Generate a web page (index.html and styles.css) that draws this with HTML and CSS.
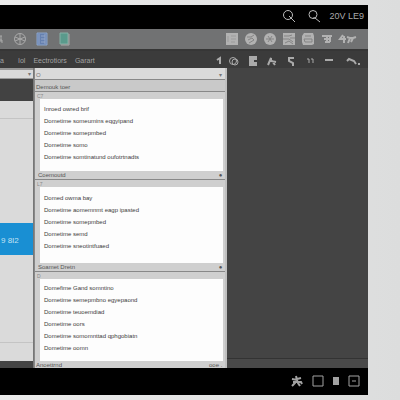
FILE: index.html
```html
<!DOCTYPE html>
<html lang="en">
<head>
    <meta charset="UTF-8">
    <meta name="viewport" content="width=device-width, initial-scale=1">
    <title>Workspace</title>
    <link rel="stylesheet" href="styles.css">
</head>
<body>
    <div class="window">
        <header class="title-bar">
            <button class="icon-btn search-btn" aria-label="Search"><svg width="14" height="14" viewBox="0 0 14 14"><circle cx="6" cy="6" r="4.5"/><path d="M7 7l6 6"/></svg></button>
            <button class="icon-btn search-btn" aria-label="Find"><svg width="14" height="14" viewBox="0 0 14 14"><circle cx="6" cy="5.500" r="4"/><path d="M6 9h2l5 4"/></svg></button>
            <span class="clock">20V LE9</span>
        </header>

        <div class="toolbar">
            <div class="tools tools-left">
                <button class="icon-btn" aria-label="Menu"><svg width="14" height="14" viewBox="0 0 14 14"><path d="M4 4h7M6 8h5v3M10 4v6"/></svg></button>
                <button class="icon-btn" aria-label="Globe"><svg width="14" height="14" viewBox="0 0 14 14"><circle cx="7" cy="7" r="5.500"/><path d="M2 5l5 2 5-2M2 9l5-2 5 2M7 2v10"/></svg></button>
                <button class="icon-btn" aria-label="Document"><svg width="14" height="14" viewBox="0 0 14 14"><path class="blue" d="M2 1h10v12H2z"/><path class="fine" d="M4 2v10M6 4h4M6 7h4M6 10h4M10 2v10"/></svg></button>
                <button class="icon-btn" aria-label="Notebook"><svg width="14" height="14" viewBox="0 0 14 14"><path class="teal" d="M3 1h8v11H3z"/><path d="M12 2v11H4"/></svg></button>
            </div>
            <div class="tools tools-right">
                <button class="icon-btn" aria-label="Page"><svg width="14" height="14" viewBox="0 0 14 14"><path class="solid" d="M1 1h12v12H1z"/><path class="cut faint" d="M3 4v6M6 4h5M6 7h5M6 10h4"/></svg></button>
                <button class="icon-btn" aria-label="Record"><svg width="14" height="14" viewBox="0 0 14 14"><circle class="solid" cx="7" cy="7" r="6"/><path class="cut" d="M3 5h4l3-2M4 8l4-2 2 2M5 11l5-3"/></svg></button>
                <button class="icon-btn" aria-label="Share"><svg width="14" height="14" viewBox="0 0 14 14"><circle class="solid" cx="7" cy="7" r="6"/><path class="cut" d="M3 7h8M5 4l4 6M9 4l-4 6"/></svg></button>
                <button class="icon-btn" aria-label="Layers"><svg width="14" height="14" viewBox="0 0 14 14"><path class="solid" d="M1 1h12v12H1z"/><path class="cut" d="M2 4h5l3-1M1 7h6l4 3M3 11l4-2 4 3M8 6h5"/></svg></button>
                <button class="icon-btn" aria-label="Save"><svg width="14" height="14" viewBox="0 0 14 14"><path class="solid" d="M3 1h9l1 3v8l-2 1H2l-1-3V4z"/><path class="cut" d="M4 4h6M3 7h8v3H4z"/></svg></button>
                <button class="icon-btn" aria-label="Format"><svg width="14" height="14" viewBox="0 0 14 14"><path class="bold" d="M2 4h10M4 7h7M7 4v6M5 10h5M10 5v5"/></svg></button>
                <button class="icon-btn wide" aria-label="Sign"><svg width="20" height="14" viewBox="0 0 20 14"><path d="M5 3L2 7h6M6 4v7" class="bold"/><path class="bold" d="M9 5l3 1-2 5M12 6h3l-2 4M15 6l3-1"/></svg></button>
            </div>
        </div>

        <nav class="menu-bar">
            <div class="menus">
                <a href="#">a</a>
                <a href="#">Iol</a>
                <a href="#">Eectrotiors</a>
                <a href="#">Garart</a>
            </div>
            <div class="tools menu-tools">
                <button class="icon-btn" aria-label="Pin"><svg width="12" height="12" viewBox="0 0 12 12"><path class="bold" d="M5 5l3-2v6"/></svg></button>
                <button class="icon-btn" aria-label="Target"><svg width="12" height="12" viewBox="0 0 12 12"><circle cx="5" cy="6" r="3.500"/><circle cx="7" cy="7" r="3"/></svg></button>
                <button class="icon-btn" aria-label="File"><svg width="12" height="12" viewBox="0 0 12 12"><path class="solid" d="M2 1h8v4H7v2h3v4H2z"/></svg></button>
                <button class="icon-btn" aria-label="Effects"><svg width="12" height="12" viewBox="0 0 12 12"><path class="bold" d="M2 10l3-7v3l5 1M3 6h3l3 4"/></svg></button>
                <button class="icon-btn" aria-label="Curve"><svg width="12" height="12" viewBox="0 0 12 12"><path class="bold" d="M9 3H4v3l4 2v3"/></svg></button>
                <button class="icon-btn" aria-label="Quote"><svg width="12" height="12" viewBox="0 0 12 12"><path d="M3 4h2v4M7 4h2v4"/></svg></button>
                <button class="icon-btn" aria-label="Line"><svg width="12" height="12" viewBox="0 0 12 12"><path class="bold" d="M2 5h8"/></svg></button>
                <button class="icon-btn wide" aria-label="Brush"><svg width="16" height="12" viewBox="0 0 16 12"><path class="bold" d="M2 6l2-2 5 2 2 3M13 9h2"/></svg></button>
            </div>
        </nav>

        <main class="workspace">
            <aside class="side">
                <div class="side-select"><span>&#9662;</span></div>
                <div class="side-dark"></div>
                <div class="side-head"></div>
                <div class="side-body">
                    <button class="side-btn">9 8I2</button>
                </div>
                <div class="side-foot"></div>
                <div class="side-end"></div>
            </aside>

            <section class="panel">
                <div class="panel-row"><span>O</span><span>&#9662;</span></div>
                <div class="panel-row shade"><span>Demouk toer</span></div>

                <div class="group">
                    <div class="group-head">C7</div>
                    <ul class="list">
                        <li>Inroed owred brif</li>
                        <li>Dometime someumins eqgyipand</li>
                        <li>Dometime somepmbed</li>
                        <li>Dometime somo</li>
                        <li>Dometime somtinatund oufotrtnadts</li>
                    </ul>
                    <div class="group-foot"><span>Coemoutd</span><span>&#9679;</span></div>
                </div>

                <div class="group roomy">
                    <div class="group-head">L7</div>
                    <ul class="list">
                        <li>Domed owma bay</li>
                        <li>Dometime aomemnmt eagp ipasted</li>
                        <li>Dometime somepmbed</li>
                        <li>Dometime semd</li>
                        <li>Dometime sneotintfuaed</li>
                    </ul>
                    <div class="group-foot"><span>Soamet Dretn</span><span>&#9679;</span></div>
                </div>

                <div class="group last">
                    <div class="group-head">D</div>
                    <ul class="list">
                        <li>Domefime Gand somntino</li>
                        <li>Dometime semepmbno egyepaond</li>
                        <li>Dometime teuoemdiad</li>
                        <li>Dometime oors</li>
                        <li>Dometime somomnttad qphgobiatn</li>
                        <li>Dometime oomn</li>
                    </ul>
                    <div class="group-foot"><span>Anoettrnd</span><span>ooe .</span></div>
                </div>
            </section>

            <section class="canvas"></section>
        </main>

        <footer class="task-bar">
            <button class="icon-btn" aria-label="Run"><svg width="14" height="14" viewBox="0 0 14 14"><path class="bold" d="M6 2l1 4-5-1M7 5l4-1M6 6l-1 3-3 3M7 6l1 3 2 3M3 8h8l1 2"/></svg></button>
            <button class="icon-btn" aria-label="Window"><svg width="14" height="14" viewBox="0 0 14 14"><path d="M2 2h10v10H2z"/></svg></button>
            <button class="icon-btn" aria-label="Stop"><svg width="14" height="14" viewBox="0 0 14 14"><path class="solid" d="M4 3h6v8H4z"/></svg></button>
            <button class="icon-btn" aria-label="Minimize"><svg width="14" height="14" viewBox="0 0 14 14"><path d="M2 2h10v10H2zM5 7h4"/></svg></button>
        </footer>
    </div>
</body>
</html>
```
FILE: styles.css
```css
* {
    box-sizing: border-box;
}

body {
    margin: 0;
    padding: 5px 32px 5px 0;
    min-height: 100vh;
    display: flex;
    background: linear-gradient(90deg, #ebebeb, #dcdddd);
    font-family: "Liberation Sans", Arial, sans-serif;
    font-size: 6px;
    line-height: 8px;
    color: #3c3c3c;
}

button {
    font: inherit;
    margin: 0;
    padding: 0;
    border: none;
    background: none;
    cursor: pointer;
}

.window {
    flex: 1;
    display: flex;
    flex-direction: column;
    background: #000;
}

/* icons */
.icon-btn {
    display: flex;
    justify-content: center;
    width: 19px;
    flex-shrink: 0;
    color: #aaa;
}

.icon-btn.wide {
    width: 24px;
}

.icon-btn svg {
    fill: none;
    stroke: currentColor;
    stroke-width: 1;
}

.icon-btn .solid {
    fill: currentColor;
    stroke: none;
}

.icon-btn .cut {
    stroke: #858585;
}

.icon-btn .faint {
    stroke: #9c9c9c;
}

.icon-btn .bold {
    stroke-width: 2;
}

.icon-btn .blue {
    fill: #6681b0;
    stroke: #8ca5cc;
}

.icon-btn .fine {
    stroke: #93a6c8;
}

.icon-btn .teal {
    fill: #5a9a8c;
    stroke: #86b0a6;
}

/* top bars */
.title-bar {
    display: flex;
    justify-content: flex-end;
    align-items: center;
    height: 24px;
    padding: 0 4px 2px 0;
}

.search-btn {
    width: 25px;
    color: #bbb;
}

.clock {
    margin-left: 3px;
    font-size: 9px;
    color: #aaa;
}

.toolbar {
    display: flex;
    justify-content: space-between;
    align-items: center;
    height: 22px;
    background: #717273;
    border-bottom: 2px solid #363636;
    overflow: hidden;
}

.tools {
    display: flex;
}

.tools-left {
    gap: 3px;
    margin-left: -12px;
}

.tools-right {
    padding-right: 8px;
}

.tools-right .icon-btn {
    color: #b2b2b2;
}

.menu-bar {
    display: flex;
    justify-content: space-between;
    align-items: center;
    height: 17px;
    padding-top: 3px;
    background: #3b3b3b;
}

.menus {
    display: flex;
    gap: 8px;
    font-size: 7px;
}

.menus a {
    color: #a2a2a2;
    text-decoration: none;
}

.menus a:first-child {
    width: 10px;
}

.menu-tools .icon-btn:first-child {
    width: 12px;
}

.menu-tools .wide {
    width: 30px;
}

/* workspace */
.workspace {
    flex: 1;
    display: grid;
    grid-template-columns: 34px 11fr 8fr;
    background: #444;
}

.side {
    display: flex;
    flex-direction: column;
    border-right: 1px solid #777;
    background: #dadada;
}

.side-select {
    height: 11px;
    padding-right: 2px;
    background: #d9d9d9;
    border-top: 2px solid #999;
    border-bottom: 1px solid #999;
    color: #777;
    text-align: right;
}

.side-dark {
    height: 22px;
    background: #424242;
}

.side-head {
    height: 18px;
    border-bottom: 1px solid #c4c4c4;
}

.side-body {
    flex: 1;
    display: flex;
    align-items: center;
    padding-top: 17px;
}

.side-btn {
    width: 100%;
    height: 32px;
    padding: 3px 0 0 1px;
    background: #198fd3;
    color: #c4e2f4;
    font-size: 8px;
    text-align: left;
}

.side-foot {
    height: 19px;
    border-top: 1px solid #c4c4c4;
}

.side-end {
    height: 7px;
    background: #454545;
}

.panel {
    display: flex;
    flex-direction: column;
    background: #cfcfcf;
    border-left: 1px solid #888;
    border-right: 2px solid #c0c0c0;
}

.panel-row {
    display: flex;
    justify-content: space-between;
    align-items: flex-end;
    height: 12px;
    padding: 0 3px 0 1px;
    background: #dadada;
    border-bottom: 1px solid #888;
    color: #777;
}

.panel-row.shade {
    background: #c9c9c9;
    color: #555;
}

.group {
    flex: auto;
    display: flex;
    flex-direction: column;
}

.group-head {
    height: 7px;
    padding-left: 2px;
    font-size: 5px;
    color: #888;
}

.list {
    flex: 1;
    margin: 0 2px 0 5px;
    padding: 4px;
    list-style: none;
    background: #fdfdfd;
    line-height: 12px;
    white-space: nowrap;
}

.roomy .list {
    padding: 5px 4px 8px;
}

.last .list {
    padding: 3px 4px;
}

.group-foot {
    display: flex;
    justify-content: space-between;
    height: 9px;
    padding: 0 3px;
    border-bottom: 1px solid #888;
    color: #555;
}

.last .group-foot {
    height: 7px;
    border-bottom: none;
    padding-left: 1px;
}

.canvas {
    border-bottom: 9px solid #494949;
    box-shadow: inset 0 -1px #333;
}

.task-bar {
    display: flex;
    justify-content: flex-end;
    align-items: center;
    height: 27px;
    padding: 0 5px 2px 0;
}

.task-bar .icon-btn {
    width: 18px;
    color: #a2a2a2;
}

.task-bar .icon-btn:first-child {
    width: 24px;
}
```
